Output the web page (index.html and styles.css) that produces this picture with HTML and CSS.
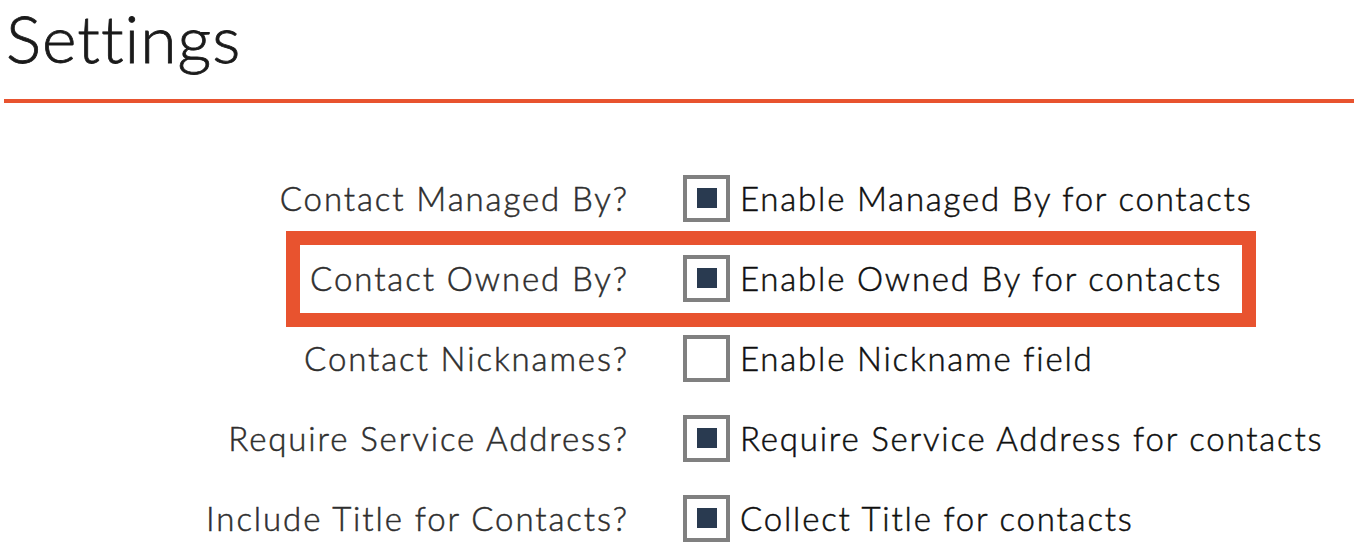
FILE: index.html
```html
<!DOCTYPE html>
<html>
<head>
<meta charset="utf-8">
<link rel="stylesheet" href="styles.css">
</head>
<body>
<div class="page">
  <h1 class="title">Settings</h1>
  <div class="rule"></div>
  <div class="settings">
    <div class="row">
      <div class="label">Contact Managed By?</div>
      <div class="box checked"><span class="mark"></span></div>
      <div class="desc">Enable Managed By for contacts</div>
    </div>
    <div class="row highlighted">
      <div class="label">Contact Owned By?</div>
      <div class="box checked"><span class="mark"></span></div>
      <div class="desc">Enable Owned By for contacts</div>
      <div class="highlight"></div>
    </div>
    <div class="row">
      <div class="label">Contact Nicknames?</div>
      <div class="box"></div>
      <div class="desc">Enable Nickname field</div>
    </div>
    <div class="row">
      <div class="label">Require Service Address?</div>
      <div class="box checked"><span class="mark"></span></div>
      <div class="desc">Require Service Address for contacts</div>
    </div>
    <div class="row">
      <div class="label">Include Title for Contacts?</div>
      <div class="box checked"><span class="mark"></span></div>
      <div class="desc">Collect Title for contacts</div>
    </div>
  </div>
</div>
</body>
</html>
```
FILE: styles.css
```css
html, body {
  margin: 0;
  padding: 0;
  background: #ffffff;
}
body {
  font-family: "Lato", "Liberation Sans", sans-serif;
  overflow: hidden;
}
.page {
  width: 1354px;
  height: 550px;
}
.title {
  margin: 0;
  padding: 0 0 0 6px;
  font-size: 66px;
  font-weight: 300;
  line-height: 76px;
  color: #1a1a1a;
  letter-spacing: 1px;
  -webkit-text-stroke: 0.8px #1a1a1a;
}
.rule {
  margin: 23px 0 0 4px;
  height: 4px;
  background: #e8532f;
}
.settings {
  padding-top: 55px;
  display: flex;
  flex-direction: column;
}
.row {
  position: relative;
  display: grid;
  grid-template-columns: 627px 47px auto;
  align-items: center;
  height: 80px;
}
.label {
  text-align: right;
  font-size: 33px;
  font-weight: 300;
  line-height: normal;
  color: #2e2e2e;
  -webkit-text-stroke: 0.5px #2e2e2e;
  letter-spacing: 1.9px;
  margin-right: -1.9px;
  white-space: nowrap;
}
.box {
  margin-left: 56px;
  width: 39px;
  height: 39px;
  border: 4px solid #808080;
  background: #fff;
  display: flex;
  align-items: center;
  justify-content: center;
}
.mark {
  width: 20px;
  height: 20px;
  background: #293a50;
}
.desc {
  margin-left: 66px;
  font-size: 33px;
  font-weight: 300;
  line-height: normal;
  color: #0f0f0f;
  -webkit-text-stroke: 0.5px #0f0f0f;
  letter-spacing: 1.8px;
  white-space: nowrap;
}
.highlight {
  position: absolute;
  left: 286px;
  top: -7px;
  width: 942px;
  height: 68px;
  border: 14px solid #e8532f;
}
```
